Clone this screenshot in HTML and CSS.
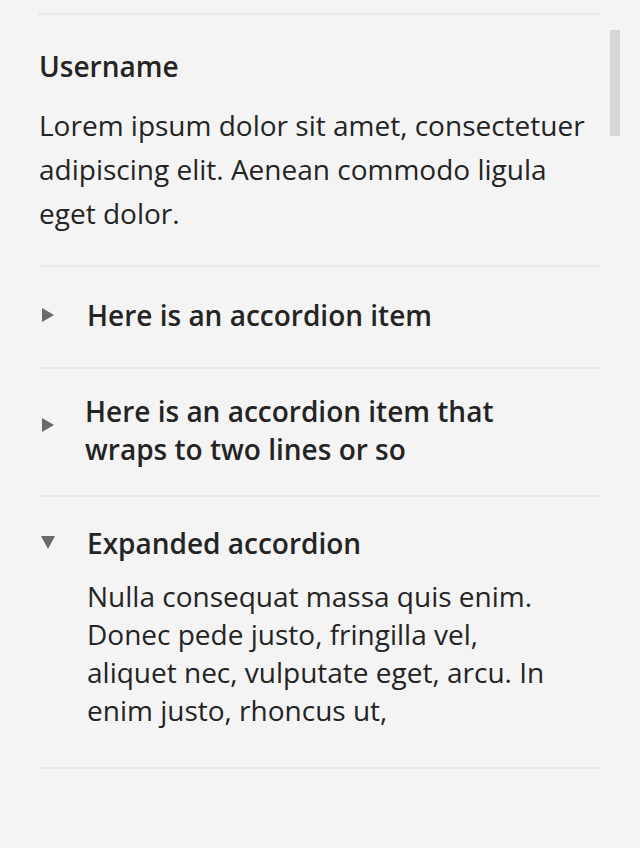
FILE: index.html
```html
<!DOCTYPE html>
<html>
<head>
<meta charset="utf-8">
<link rel="stylesheet" href="styles.css">
</head>
<body>
<div class="page">
  <section class="profile">
    <h2 class="username">Username</h2>
    <p class="bio">Lorem ipsum dolor sit amet, consectetuer adipiscing elit. Aenean commodo ligula eget dolor.</p>
  </section>
  <div class="accordion">
    <div class="item">
      <div class="head">
        <span class="tri tri-right"></span>
        <span class="title">Here is an accordion item</span>
      </div>
    </div>
    <div class="item item-wrap">
      <div class="head">
        <span class="tri tri-right"></span>
        <span class="title">Here is an accordion item that wraps to two lines or so</span>
      </div>
    </div>
    <div class="item item-open">
      <div class="head head-top">
        <span class="tri tri-down"></span>
        <span class="title">Expanded accordion</span>
      </div>
      <p class="content">Nulla consequat massa quis enim. Donec pede justo, fringilla vel, aliquet nec, vulputate eget, arcu. In enim justo, rhoncus ut,</p>
    </div>
  </div>
</div>
<div class="scrollbar"></div>
</body>
</html>
```
FILE: styles.css
```css
html, body {
  margin: 0;
  padding: 0;
  background: #f4f4f4;
}
body {
  font-family: "Open Sans", "Liberation Sans", sans-serif;
  color: #242424;
  width: 640px;
  height: 848px;
  overflow: hidden;
}
.page {
  padding: 13px 40px 0 38px;
}
.profile {
  border-top: 2px solid #e8e8e8;
  padding: 29px 2px 30px 1px;
}
.username {
  margin: 0;
  font-size: 28px;
  font-weight: 600;
  line-height: 44px;
}
.bio {
  margin: 15px 0 0;
  font-size: 28px;
  line-height: 44px;
}
.accordion {
  margin-left: 2px;
}
.item {
  border-top: 2px solid #e8e8e8;
}
.item:last-child {
  border-bottom: 2px solid #e8e8e8;
}
.head {
  display: flex;
  align-items: center;
  padding: 29px 0 33px;
}
.item-wrap .head {
  padding: 23px 60px 27px 0;
}
.head-top {
  align-items: flex-start;
  padding: 27px 0 0;
}
.tri {
  width: 0;
  height: 0;
  flex: none;
  margin-left: 2px;
}
.tri-right {
  border-top: 7px solid transparent;
  border-bottom: 7px solid transparent;
  border-left: 12px solid #686b6b;
  margin-right: 33px;
}
.item-wrap .tri-right {
  margin-right: 31px;
  margin-bottom: 10px;
}
.tri-down {
  border-left: 7px solid transparent;
  border-right: 7px solid transparent;
  border-top: 13px solid #686b6b;
  margin-left: 1px;
  margin-top: 12px;
  margin-right: 32px;
}
.title {
  font-size: 28px;
  font-weight: 600;
  line-height: 38px;
}
.content {
  margin: 15px 40px 0 47px;
  padding-bottom: 38px;
  font-size: 28px;
  line-height: 38px;
}
.scrollbar {
  position: absolute;
  left: 610px;
  top: 30px;
  width: 10px;
  height: 106px;
  background: #d6d6d6;
}
```
